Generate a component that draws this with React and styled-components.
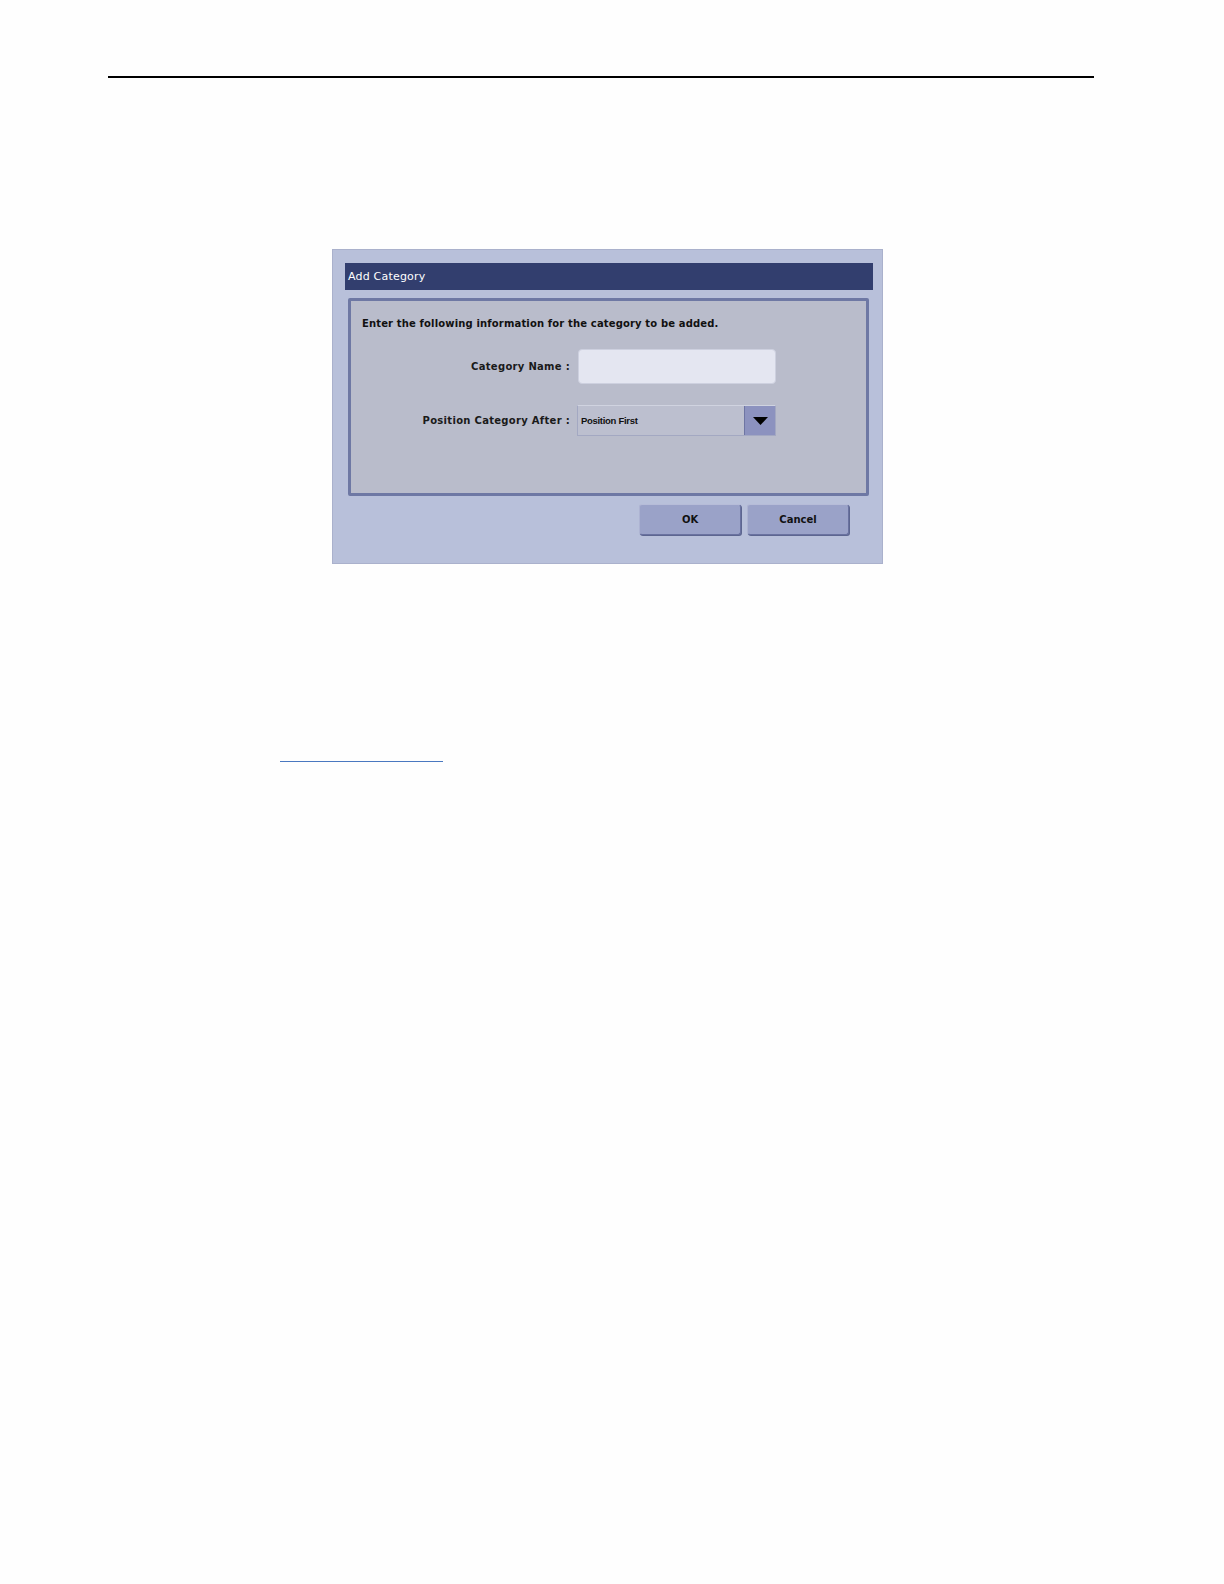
import styled, { createGlobalStyle } from "styled-components";

const GlobalStyle = createGlobalStyle`
  html, body {
    margin: 0;
    background: #fefefe;
    font-family: "DejaVu Sans", "Liberation Sans", sans-serif;
  }
`;

const Page = styled.div`
  padding-top: 76px;
  display: flex;
  flex-direction: column;
`;

const TopRule = styled.hr`
  margin: 0 0 0 108px;
  width: 986px;
  height: 2px;
  border: 0;
  background: #000;
`;

const Dialog = styled.div`
  margin: 171px 0 0 332px;
  width: 551px;
  height: 315px;
  box-sizing: border-box;
  background: #b8c0da;
  border: 1px solid #aab1cc;
  padding: 13px 9px 0 12px;
  display: flex;
  flex-direction: column;
`;

const TitleBar = styled.div`
  height: 27px;
  background: #323e6e;
  color: #fff;
  font-size: 11px;
  line-height: 27px;
  padding-left: 3px;
  letter-spacing: 0.2px;
`;

const Panel = styled.div`
  margin: 8px 4px 0 3px;
  height: 198px;
  box-sizing: border-box;
  background: #b9bccb;
  border: 3px solid #6e78a4;
  border-radius: 2px;
  padding: 17px 0 0 11px;
`;

const Intro = styled.div`
  font-size: 10px;
  font-weight: bold;
  color: #111;
  letter-spacing: 0.15px;
`;

const Form = styled.div`
  display: grid;
  grid-template-columns: 208px 198px;
  column-gap: 8px;
  row-gap: 21px;
  margin-top: 20px;
  align-items: center;
`;

const Label = styled.label`
  text-align: right;
  font-size: 10px;
  font-weight: bold;
  color: #1a1a1a;
  letter-spacing: 0.3px;
`;

const TextInput = styled.div`
  height: 35px;
  box-sizing: border-box;
  background: #e4e6f1;
  border: 1px solid #cdd0df;
  border-radius: 4px;
`;

const Select = styled.div`
  height: 31px;
  margin-left: -1px;
  box-sizing: border-box;
  background: #bcbfcf;
  border: 1px solid #a3a8c2;
  border-top-color: #d0d3e0;
  display: flex;
  align-items: stretch;
`;

const SelectValue = styled.div`
  flex: 1;
  font-family: "Liberation Sans", Arial, sans-serif;
  font-size: 9.5px;
  font-weight: bold;
  letter-spacing: -0.3px;
  color: #111;
  display: flex;
  align-items: center;
  padding-left: 3px;
`;

const ArrowButton = styled.div`
  width: 30px;
  background: #8c92bf;
  border-left: 1px solid #6e75a3;
  display: flex;
  align-items: center;
  justify-content: center;
`;

const ButtonRow = styled.div`
  display: flex;
  justify-content: flex-end;
  gap: 6px;
  margin: 8px 24px 0 0;
`;

const Button = styled.button`
  width: 102px;
  height: 31px;
  background: #9aa2c8;
  border: 1px solid #6a72a0;
  border-top-color: #b6bcd8;
  border-left-color: #adb3d2;
  border-radius: 3px;
  box-shadow: 1px 1px 0 #5d6690;
  font-family: "DejaVu Sans", sans-serif;
  font-size: 10px;
  font-weight: 600;
  color: #111;
  padding: 0;
`;

const LinkLine = styled.div`
  margin: 197px 0 0 280px;
  width: 163px;
  height: 1px;
  background: #4a78c0;
`;

export default function App() {
  return (
    <>
      <GlobalStyle />
      <Page>
        <TopRule />
        <Dialog>
          <TitleBar>Add Category</TitleBar>
          <Panel>
            <Intro>Enter the following information for the category to be added.</Intro>
            <Form>
              <Label>Category Name :</Label>
              <TextInput />
              <Label>Position Category After :</Label>
              <Select>
                <SelectValue>Position First</SelectValue>
                <ArrowButton>
                  <svg width="15" height="8" viewBox="0 0 15 8">
                    <path d="M0 0 H15 L7.5 8 Z" fill="#000" />
                  </svg>
                </ArrowButton>
              </Select>
            </Form>
          </Panel>
          <ButtonRow>
            <Button>OK</Button>
            <Button>Cancel</Button>
          </ButtonRow>
        </Dialog>
        <LinkLine />
      </Page>
    </>
  );
}
